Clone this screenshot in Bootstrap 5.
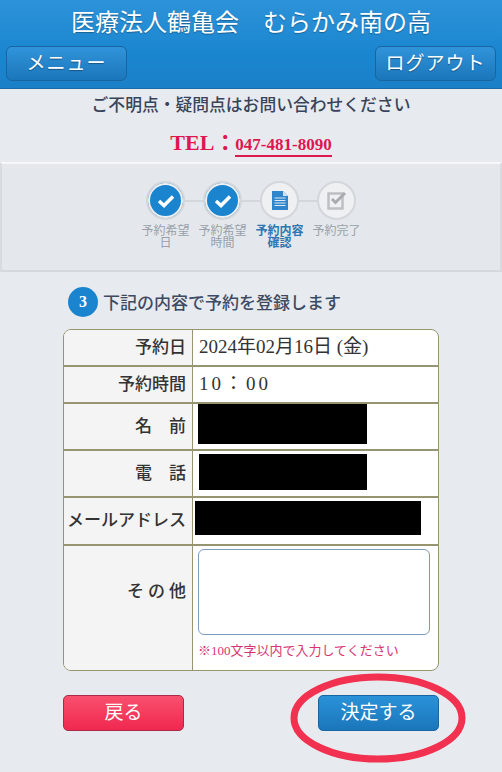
<!doctype html>
<html lang="ja">
<head>
<meta charset="utf-8">
<title>予約内容確認</title>
<meta name="viewport" content="width=device-width, initial-scale=1">
<link href="https://cdn.jsdelivr.net/npm/bootstrap@5.3.3/dist/css/bootstrap.min.css" rel="stylesheet">
<style>
  html, body { height: 772px; overflow: hidden; }
  body { font-family: "Liberation Serif", "Noto Sans CJK JP", serif; background: #e7ebef; color: #39445a; position: relative; }

  /* ヘッダー */
  .top-head { height: 89px; background: linear-gradient(#2d93d9, #1a86d0 60%, #1a80c8); border-bottom: 1px solid #1a6ca8; color: #fff; padding: 0 6px; }
  .top-title { font-size: 24px; line-height: 24px; padding-top: 11px; height: 46px; text-align: center; text-shadow: 0 1px 1px rgba(0,0,0,.3); }
  .head-btn { width: 121px; height: 35px; padding: 0; font-size: 19px; line-height: 33px; color: #fff; letter-spacing: 1px; border: 1px solid #19659f; border-radius: 6px; background: linear-gradient(#3194da, #1b76bb); text-shadow: 0 1px 1px rgba(0,0,0,.35); }

  /* 連絡先 */
  .ask-line { font-size: 16.800px; line-height: 20px; padding-top: 7px; height: 27px; text-align: center; font-weight: 500; }
  .tel-line { height: 43px; padding-top: 14px; text-align: center; color: #e0164f; font-weight: 700; font-size: 22px; line-height: 26px; }
  .tel-line a { color: #e0164f; font-size: 17px; text-decoration: none; border-bottom: 2px solid #e0164f; padding-bottom: 1px; margin-left: -1px; }

  /* ステップ */
  .step-box { height: 110px; background: #e4e8ec; border-top: 2px solid #f6f7f8; border-bottom: 2px solid #d5d8dc; border-left: 2px solid #d8dbdf; border-right: 2px solid #d8dbdf; margin-top: 3px; padding-top: 17px; }
  .step-item { width: 57px; text-align: center; position: relative; font-size: 12px; line-height: 12px; color: #98a0a9; }
  .step-item.now { color: #2b76b5; font-weight: 700; }
  .step-ring { width: 39px; height: 39px; margin: 0 auto 5px; border-radius: 50%; border: 2px solid #d3d6da; background: #eef0f2; display: flex; align-items: center; justify-content: center; position: relative; z-index: 1; }
  .step-ring.done { background: #1b84cf; box-shadow: inset 0 0 0 2px #eef0f2; }
  .step-item + .step-item::before { content: ""; position: absolute; left: -20px; width: 40px; top: 19px; height: 2px; background: #d3d6da; }

  /* 見出し */
  .sec-head { padding: 15px 0 0 68px; height: 57px; font-size: 17px; font-weight: 500; color: #3d4a62; gap: 5px; }
  .sec-num { width: 30px; height: 30px; border-radius: 50%; background: #1b84cf; color: #fff; font-weight: 700; font-size: 16px; text-align: center; line-height: 30px; }

  /* 入力内容テーブル */
  .conf-wrap { margin: 0 63px; width: 376px; border: 1px solid #97956f; border-radius: 8px; overflow: hidden; background: #fff; }
  .conf-row { display: flex; border-top: 2px solid #97956f; }
  .conf-row:first-child { border-top: 0; }
  .conf-th { width: 129px; flex: none; background: #f4f4f4; border-right: 1px solid #97956f; text-align: right; padding-right: 6px; font-size: 17px; font-weight: 500; color: #333; display: flex; align-items: center; justify-content: flex-end; }
  .conf-td { flex: 1; font-size: 19px; color: #333; padding-left: 6px; display: flex; align-items: center; }
  .time-text { letter-spacing: 3px; }
  .other-label { letter-spacing: 4px; margin-right: -4px; padding-bottom: 32px; }
  .mask { background: #000; height: 40px; margin-left: -1px; margin-bottom: 6px; }
  .mask-tel { height: 36px; margin-left: 0; margin-bottom: 4px; }
  .mask-mail { height: 34px; margin-left: -4px; margin-bottom: 6px; }
  .memo-box { width: 232px; height: 86px; border: 1px solid #7d9cc0; border-radius: 6px; background: #fff; display: block; margin-top: 3px; margin-left: -1px; resize: none; }
  .memo-note { color: #d8336f; font-size: 13px; line-height: 16px; margin-top: 8px; margin-left: -1px; }

  /* 下部ボタン */
  .act-row { margin: 24px 63px 0; width: 376px; }
  .act-btn { width: 121px; height: 36px; padding: 0; font-size: 19px; line-height: 34px; color: #fff; border-radius: 5px; }
  .act-back { background: linear-gradient(#f9506e, #f0284f); border: 1px solid #a82a48; }
  .act-go { background: linear-gradient(#2a92d8, #1b76bb); border: 1px solid #19659f; }

  /* 赤丸 */
  .red-ring { position: absolute; left: 290px; top: 672px; }
</style>
</head>
<body>

<header class="top-head">
  <div class="top-title">医療法人鶴亀会　むらかみ南の高</div>
  <div class="d-flex justify-content-between">
    <button type="button" class="btn head-btn">メニュー</button>
    <button type="button" class="btn head-btn">ログアウト</button>
  </div>
</header>

<div class="ask-line">ご不明点・疑問点はお問い合わせください</div>
<div class="tel-line">TEL：<a href="#">047-481-8090</a></div>

<!-- ステップ表示 -->
<div class="step-box d-flex justify-content-center">
  <div class="step-item">
    <div class="step-ring done"><svg width="20" height="16" viewBox="0 0 20 16"><path d="M3 8l5 4.5L17 3.500" fill="none" stroke="#fff" stroke-width="3.500"/></svg></div>
    予約希望日
  </div>
  <div class="step-item">
    <div class="step-ring done"><svg width="20" height="16" viewBox="0 0 20 16"><path d="M3 8l5 4.5L17 3.500" fill="none" stroke="#fff" stroke-width="3.500"/></svg></div>
    予約希望時間
  </div>
  <div class="step-item now">
    <div class="step-ring"><svg width="18" height="21" viewBox="0 0 18 21"><path d="M1 1h11l5 5v14H1z" fill="#2f86cc"/><path d="M12 1v5h5z" fill="#cfe3f3"/><path d="M3.500 8h11M3.500 10.500h11M3.500 13h11M3.500 15.500h11" stroke="#dbeaf6" stroke-width="1"/></svg></div>
    予約内容確認
  </div>
  <div class="step-item">
    <div class="step-ring"><svg width="20" height="19" viewBox="0 0 20 19"><path d="M1.500 2.500h14v15h-14z" fill="none" stroke="#bdbfc3" stroke-width="2.500"/><path d="M5 8l3.500 3.500L18 2" fill="none" stroke="#a9abb0" stroke-width="3"/></svg></div>
    予約完了
  </div>
</div>

<div class="sec-head d-flex align-items-start">
  <span class="sec-num">3</span>
  <span class="pt-1">下記の内容で予約を登録します</span>
</div>

<div class="conf-wrap">
  <div class="conf-row" style="height:35px">
    <div class="conf-th">予約日</div>
    <div class="conf-td">2024年02月16日 (金)</div>
  </div>
  <div class="conf-row" style="height:37px">
    <div class="conf-th">予約時間</div>
    <div class="conf-td"><span class="time-text">10：00</span></div>
  </div>
  <div class="conf-row" style="height:47px">
    <div class="conf-th">名　前</div>
    <div class="conf-td"><div class="mask" style="width:169px"></div></div>
  </div>
  <div class="conf-row" style="height:47px">
    <div class="conf-th">電　話</div>
    <div class="conf-td"><div class="mask mask-tel" style="width:168px"></div></div>
  </div>
  <div class="conf-row" style="height:48px">
    <div class="conf-th">メールアドレス</div>
    <div class="conf-td"><div class="mask mask-mail" style="width:226px"></div></div>
  </div>
  <div class="conf-row" style="height:126px">
    <div class="conf-th"><span class="other-label">その他</span></div>
    <div class="conf-td d-block">
      <textarea class="memo-box"></textarea>
      <div class="memo-note">※100文字以内で入力してください</div>
    </div>
  </div>
</div>

<div class="act-row d-flex justify-content-between">
  <button type="button" class="btn act-btn act-back">戻る</button>
  <button type="button" class="btn act-btn act-go">決定する</button>
</div>

<svg class="red-ring" width="178" height="92" viewBox="0 0 178 92"><ellipse cx="88" cy="46" rx="84" ry="41" fill="none" stroke="#f2304f" stroke-width="7"/></svg>

</body>
</html>
